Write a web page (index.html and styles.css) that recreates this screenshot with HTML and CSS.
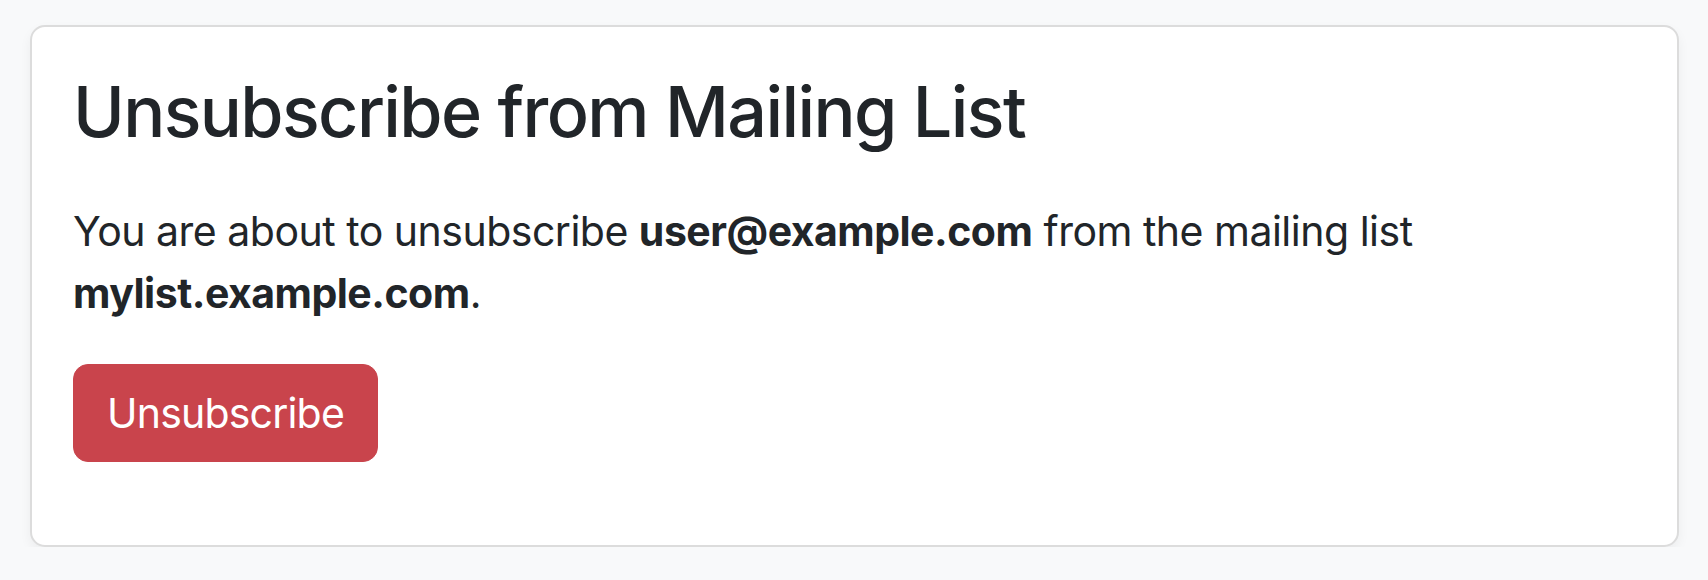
FILE: index.html
```html
<!DOCTYPE html>
<html lang="en">
<head>
<meta charset="utf-8">
<title>Unsubscribe from Mailing List</title>
<link rel="stylesheet" href="styles.css">
</head>
<body>
<main class="page">
  <section class="card">
    <h1 class="card-title">Unsubscribe from Mailing List</h1>
    <p class="card-text">You are about to unsubscribe <strong>user@example.com</strong> from the mailing list <strong>mylist.example.com</strong>.</p>
    <form class="card-form">
      <button type="button" class="btn-danger">Unsubscribe</button>
    </form>
  </section>
</main>
</body>
</html>
```
FILE: styles.css
```css
* { box-sizing: border-box; }
html, body { margin: 0; padding: 0; }
body {
  background: #f8f9fa;
  color: #212529;
  font-family: Inter, "Noto Sans", "Liberation Sans", sans-serif;
  -webkit-font-smoothing: antialiased;
}
.page {
  padding: 25px 29px 0 30px;
}
.card {
  background: #fff;
  border: 2px solid #dcdcdc;
  border-radius: 15px;
  box-shadow: 0 5px 12px rgba(0, 0, 0, 0.05);
  padding: 42px 42px 80px 41px;
  height: 522px;
}
.card-title {
  margin: 0 0 45px 0;
  font-size: 70px;
  font-weight: 500;
  line-height: 86px;
  letter-spacing: -1.6px;
}
.card-text {
  margin: 0 0 40px 0;
  font-size: 41px;
  line-height: 62px;
  letter-spacing: -0.5px;
}
.card-text strong { font-weight: 700; }
.card-form { margin: 0; }
.btn-danger {
  display: inline-block;
  background: #c9444c;
  color: #fff;
  border: 1px solid #c9444c;
  border-radius: 15px;
  font-family: inherit;
  font-size: 41px;
  line-height: 62px;
  padding: 17px 33px;
  letter-spacing: -0.8px;
  cursor: pointer;
}
```
